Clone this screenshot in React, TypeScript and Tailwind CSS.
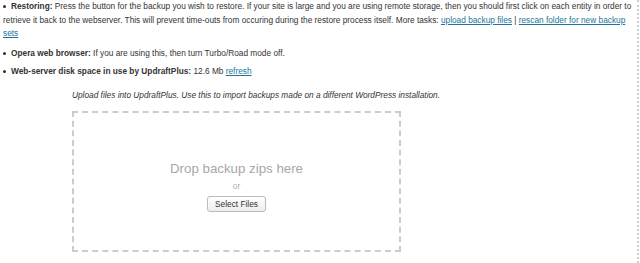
import React from "react";

function Bullet() {
  return <span className="mr-[5px] inline-block h-[3px] w-[3px] rounded-full bg-[#333] align-middle" />;
}

function L({ children }: { children: React.ReactNode }) {
  return <a href="#" className="text-[#21759b] underline">{children}</a>;
}

export default function App() {
  return (
    <div className="flex h-[263px] w-[640px] overflow-hidden bg-white font-['Liberation_Sans',Arial,sans-serif] text-[8.3px] leading-[13.7px] text-[#333]">
      <div className="min-w-0 flex-1 pr-[4px]">
        <ul>
          <li className="pl-[3px]">
            <Bullet />
            <b>Restoring:</b> Press the button for the backup you wish to restore. If your site is large and you are using remote storage, then you should first click on each entity in order to retrieve it back to the webserver. This will prevent time-outs from occuring during the restore process itself. More tasks: <L>upload backup files</L> | <L>rescan folder for new backup sets</L>
          </li>
          <li className="mt-[6px] pl-[3px]">
            <Bullet />
            <b>Opera web browser:</b> If you are using this, then turn Turbo/Road mode off.
          </li>
          <li className="mt-[4px] pl-[3px]">
            <Bullet />
            <b>Web-server disk space in use by UpdraftPlus:</b> 12.6 Mb <L>refresh</L>
          </li>
        </ul>
        <div className="ml-[72px] mt-[10px]">
          <p className="italic">Upload files into UpdraftPlus. Use this to import backups made on a different WordPress installation.</p>
          <div className="mt-[9px] flex h-[141px] w-[329px] flex-col items-center border-2 border-dashed border-[#cccccc] pt-[48px]">
            <p className="text-[13.3px] leading-[16px] text-[#a8a8a8]">Drop backup zips here</p>
            <p className="mt-[4px] leading-[10px] text-[#b0b0b0]">or</p>
            <button className="mt-[5px] h-[16px] rounded-[3px] border border-[#bbbbbb] bg-gradient-to-b from-white to-[#ededed] px-[7px] leading-[14px] text-[#333]">
              Select Files
            </button>
          </div>
        </div>
      </div>
      <div className="mr-[1px] w-[2px] border-l-2 border-dotted border-[#cccccc]" />
    </div>
  );
}
